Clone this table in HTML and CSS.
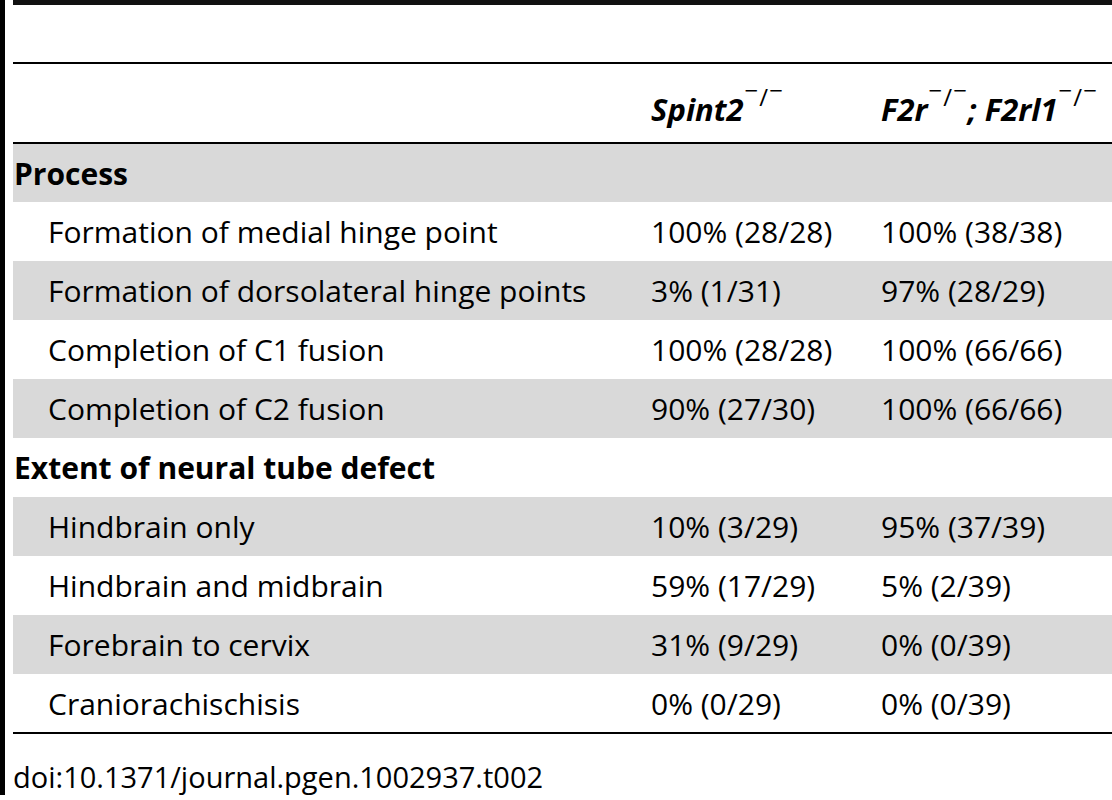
FILE: index.html
```html
<!DOCTYPE html>
<html>
<head>
<meta charset="utf-8">
<link rel="stylesheet" href="styles.css">
</head>
<body>
<div class="page">
  <table class="data">
    <colgroup>
      <col class="c1">
      <col class="c2">
      <col class="c3">
    </colgroup>
    <thead>
      <tr class="blank"><th colspan="3"></th></tr>
      <tr class="heads">
        <th></th>
        <th><i>Spint2</i><sup><span class="m">−</span>/<span class="m">−</span></sup></th>
        <th><i>F2r</i><sup><span class="m">−</span>/<span class="m">−</span></sup><i>; F2rl1</i><sup><span class="m">−</span>/<span class="m">−</span></sup></th>
      </tr>
    </thead>
    <tbody>
      <tr class="sec shade"><td colspan="3">Process</td></tr>
      <tr><td class="lbl">Formation of medial hinge point</td><td>100% (28/28)</td><td>100% (38/38)</td></tr>
      <tr class="shade"><td class="lbl">Formation of dorsolateral hinge points</td><td>3% (1/31)</td><td>97% (28/29)</td></tr>
      <tr><td class="lbl">Completion of C1 fusion</td><td>100% (28/28)</td><td>100% (66/66)</td></tr>
      <tr class="shade"><td class="lbl">Completion of C2 fusion</td><td>90% (27/30)</td><td>100% (66/66)</td></tr>
      <tr class="sec"><td colspan="3">Extent of neural tube defect</td></tr>
      <tr class="shade"><td class="lbl">Hindbrain only</td><td>10% (3/29)</td><td>95% (37/39)</td></tr>
      <tr><td class="lbl">Hindbrain and midbrain</td><td>59% (17/29)</td><td>5% (2/39)</td></tr>
      <tr class="shade"><td class="lbl">Forebrain to cervix</td><td>31% (9/29)</td><td>0% (0/39)</td></tr>
      <tr class="last"><td class="lbl">Craniorachischisis</td><td>0% (0/29)</td><td>0% (0/39)</td></tr>
    </tbody>
  </table>
  <p class="doi">doi:10.1371/journal.pgen.1002937.t002</p>
</div>
</body>
</html>
```
FILE: styles.css
```css
html, body {
  margin: 0;
  padding: 0;
  background: #fff;
}
body {
  font-family: "Open Sans", "DejaVu Sans", sans-serif;
  color: #000;
  width: 1112px;
  height: 800px;
  overflow: hidden;
}
.page {
  border-left: 5px solid #000;
  padding-left: 8px;
  height: 795px;
  overflow-x: clip;
}
.data {
  border-collapse: collapse;
  table-layout: fixed;
  width: 1099px;
  font-size: 30px;
}
.c1 { width: 638px; }
.c2 { width: 230px; }
.c3 { width: 231px; }
.data th, .data td {
  padding: 0;
  text-align: left;
  white-space: nowrap;
}
.blank th {
  height: 57px;
  border-top: 5px solid #111;
  border-bottom: 2px solid #000;
}
.heads th {
  height: 80px;
  vertical-align: bottom;
  padding-bottom: 12px;
  box-sizing: border-box;
  border-bottom: 2px solid #000;
  font-weight: 700;
  font-size: 31px;
  line-height: 41px;
  overflow: visible;
}
.heads th i { font-style: italic; }
.heads sup {
  font-size: 24px;
  font-weight: 400;
  vertical-align: 0;
  position: relative;
  top: -15px;
  line-height: 0;
  padding-left: 1px;
  letter-spacing: 1px;
}
.heads sup .m {
  position: relative;
  top: -7px;
}
.data tbody td {
  height: 59px;
  box-sizing: border-box;
  vertical-align: middle;
}
.data tbody td.lbl { padding-left: 35px; }
.sec td {
  font-weight: 700;
  padding-left: 1px;
}
.shade td { background: #d9d9d9; }
.last td { border-bottom: 2px solid #000; }
.doi {
  margin: 28px 0 0 0;
  font-size: 29px;
  line-height: 30px;
}
```
